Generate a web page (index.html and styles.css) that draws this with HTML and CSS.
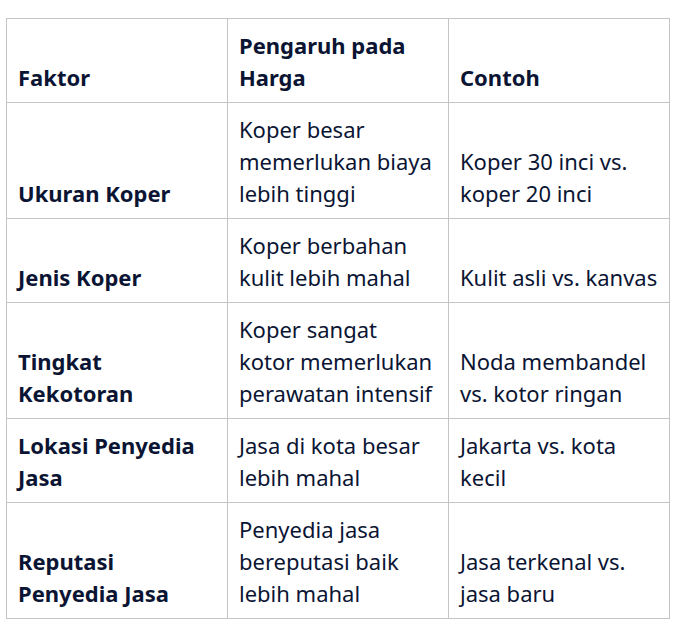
FILE: index.html
```html
<!DOCTYPE html>
<html>
<head>
<meta charset="utf-8">
<link rel="stylesheet" href="styles.css">
</head>
<body>
<table class="tbl">
  <colgroup><col class="col"><col class="col"><col class="col"></colgroup>
  <thead>
    <tr><th>Faktor</th><th>Pengaruh pada Harga</th><th>Contoh</th></tr>
  </thead>
  <tbody>
    <tr><td class="k">Ukuran Koper</td><td>Koper besar memerlukan biaya lebih tinggi</td><td>Koper 30 inci vs. koper 20 inci</td></tr>
    <tr><td class="k">Jenis Koper</td><td>Koper berbahan kulit lebih mahal</td><td>Kulit asli vs. kanvas</td></tr>
    <tr><td class="k">Tingkat Kekotoran</td><td>Koper sangat kotor memerlukan perawatan intensif</td><td>Noda membandel vs. kotor ringan</td></tr>
    <tr><td class="k">Lokasi Penyedia Jasa</td><td>Jasa di kota besar lebih mahal</td><td>Jakarta vs. kota kecil</td></tr>
    <tr><td class="k">Reputasi Penyedia Jasa</td><td>Penyedia jasa bereputasi baik lebih mahal</td><td>Jasa terkenal vs. jasa baru</td></tr>
  </tbody>
</table>
</body>
</html>
```
FILE: styles.css
```css
html, body { margin: 0; padding: 0; background: #fff; }
body { padding: 18px 0 0 6px; font-family: "Noto Sans", "Open Sans", sans-serif; color: #0b1533; }
.tbl { border-collapse: collapse; table-layout: fixed; width: 663px; font-size: 22px; line-height: 32px; }
.tbl .col { width: 221px; }
.tbl th, .tbl td { border: 1px solid #c4c4c4; padding: 10px 12px 9px 11px; vertical-align: bottom; text-align: left; }
.tbl th:last-child, .tbl td:last-child { padding-right: 5px; }
.tbl th { font-weight: 700; }
.tbl td.k { font-weight: 700; }
```
